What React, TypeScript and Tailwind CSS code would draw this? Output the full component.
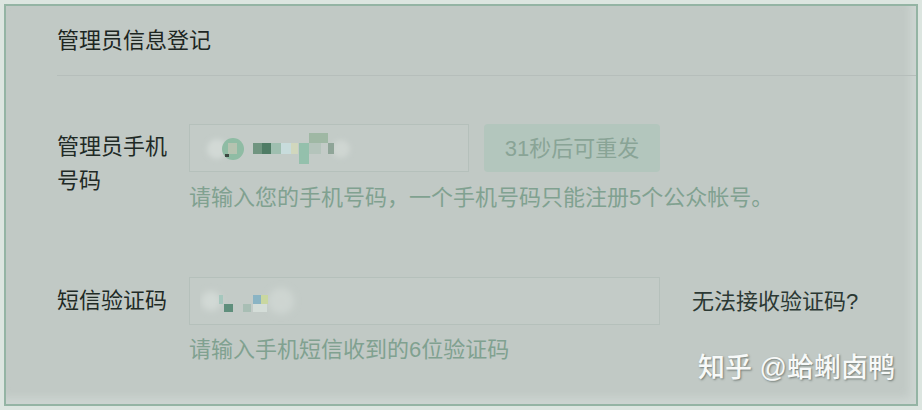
const Mosaic1 = () => (
    <svg width="160" height="48" viewBox="0 0 160 48" className="absolute left-[10px] top-0">
        <defs>
            <filter id="soft1" x="-20%" y="-20%" width="140%" height="140%">
                <feGaussianBlur stdDeviation="0.6" />
            </filter>
            <filter id="soft2" x="-50%" y="-50%" width="200%" height="200%">
                <feGaussianBlur stdDeviation="2.5" />
            </filter>
        </defs>
        <circle cx="17" cy="24" r="10" fill="#d2d9d5" filter="url(#soft2)" />
        <circle cx="141" cy="24" r="9" fill="#cfd6d2" filter="url(#soft2)" />
        <g filter="url(#soft1)">
            <circle cx="33" cy="24" r="11" fill="#8fbca4" />
            <rect x="28" y="18" width="9" height="11" fill="#b5c3b0" />
            <rect x="25" y="29" width="4" height="3" fill="#3c4a43" />
            <rect x="53" y="18" width="9" height="11" fill="#6f9580" />
            <rect x="62" y="18" width="9" height="11" fill="#4f7b65" />
            <rect x="71" y="18" width="10" height="11" fill="#9fbfb0" />
            <rect x="81" y="18" width="10" height="11" fill="#c8dcdc" />
            <rect x="91" y="18" width="7" height="11" fill="#d1d7bd" />
            <rect x="99" y="18" width="10" height="21" fill="#94c0ac" />
            <rect x="109" y="8" width="19" height="10" fill="#9fb8a4" />
            <rect x="109" y="18" width="12" height="11" fill="#b4c4bb" />
            <rect x="128" y="18" width="6" height="11" fill="#8fa598" />
        </g>
    </svg>
);

const Mosaic2 = () => (
    <svg width="110" height="48" viewBox="0 0 110 48" className="absolute left-[10px] top-0">
        <defs>
            <filter id="soft3" x="-20%" y="-20%" width="140%" height="140%">
                <feGaussianBlur stdDeviation="0.6" />
            </filter>
            <filter id="soft4" x="-50%" y="-50%" width="200%" height="200%">
                <feGaussianBlur stdDeviation="3" />
            </filter>
        </defs>
        <circle cx="11" cy="23" r="10" fill="#d2d9d5" filter="url(#soft4)" />
        <circle cx="81" cy="23" r="13" fill="#ced5d1" filter="url(#soft4)" />
        <g filter="url(#soft3)">
            <rect x="19" y="17" width="4" height="9" fill="#a5c7bd" />
            <rect x="24" y="26" width="9" height="8" fill="#5e8f7c" />
            <rect x="43" y="26" width="8" height="8" fill="#a8beb4" />
            <rect x="53" y="17" width="8" height="9" fill="#8ab4c4" />
            <rect x="61" y="17" width="7" height="9" fill="#c9d7a0" />
            <rect x="53" y="26" width="14" height="8" fill="#d4ddd8" />
        </g>
    </svg>
);

const App = () => {
    return (
        <div className="w-[922px] h-[410px] bg-[#dce5e0] p-[4px] font-['Liberation_Sans','Noto_Sans_CJK_SC',sans-serif]">
            <div className="relative h-full border-2 border-[#94b4a4] bg-[#c1c9c5] shadow-[inset_-6px_-6px_10px_rgba(230,238,234,0.35)]">
                {/* Header */}
                <div className="ml-[51px] h-[70px] flex items-center border-b border-[#b6bebb]">
                    <span className="text-[22px] leading-[30px] text-[#1d2622]">管理员信息登记</span>
                </div>

                {/* Phone row */}
                <div className="mt-[48px] pl-[51px] flex items-start">
                    <div className="w-[132px] pr-[12px] pt-[6px] text-[22px] leading-[34px] text-[#1f2a25]">
                        管理员手机号码
                    </div>
                    <div className="flex flex-col">
                        <div className="flex items-center gap-[15px]">
                            <div className="relative w-[280px] h-[48px] border border-[#b5c0bb] bg-[#c3cbc7]">
                                <Mosaic1 />
                            </div>
                            <button
                                type="button"
                                className="w-[176px] h-[48px] rounded-[4px] bg-[#b3c6bd] text-[22px] text-[#89a496]"
                            >
                                31秒后可重发
                            </button>
                        </div>
                        <p className="mt-[12px] text-[22px] leading-[28px] text-[#80a190]">
                            请输入您的手机号码，一个手机号码只能注册5个公众帐号。
                        </p>
                    </div>
                </div>

                {/* SMS code row */}
                <div className="mt-[65px] pl-[51px] flex items-start">
                    <div className="w-[132px] text-[22px] leading-[48px] text-[#1f2a25]">短信验证码</div>
                    <div className="flex flex-col">
                        <div className="flex items-center">
                            <div className="relative w-[471px] h-[48px] border border-[#b5c0bb] bg-[#c3cbc7]">
                                <Mosaic2 />
                            </div>
                            <a className="ml-[32px] text-[22px] text-[#2b3833] cursor-pointer">无法接收验证码?</a>
                        </div>
                        <p className="mt-[11px] text-[22px] leading-[28px] text-[#80a190]">
                            请输入手机短信收到的6位验证码
                        </p>
                    </div>
                </div>

                {/* Watermark */}
                <div className="absolute left-[692px] top-[347px] text-[27px] leading-[30px] font-medium text-[#f7f9f8] [text-shadow:1px_1px_2px_rgba(60,70,65,0.6)]">
                    知乎 @蛤蜊卤鸭
                </div>
            </div>
        </div>
    );
};

export default App;
